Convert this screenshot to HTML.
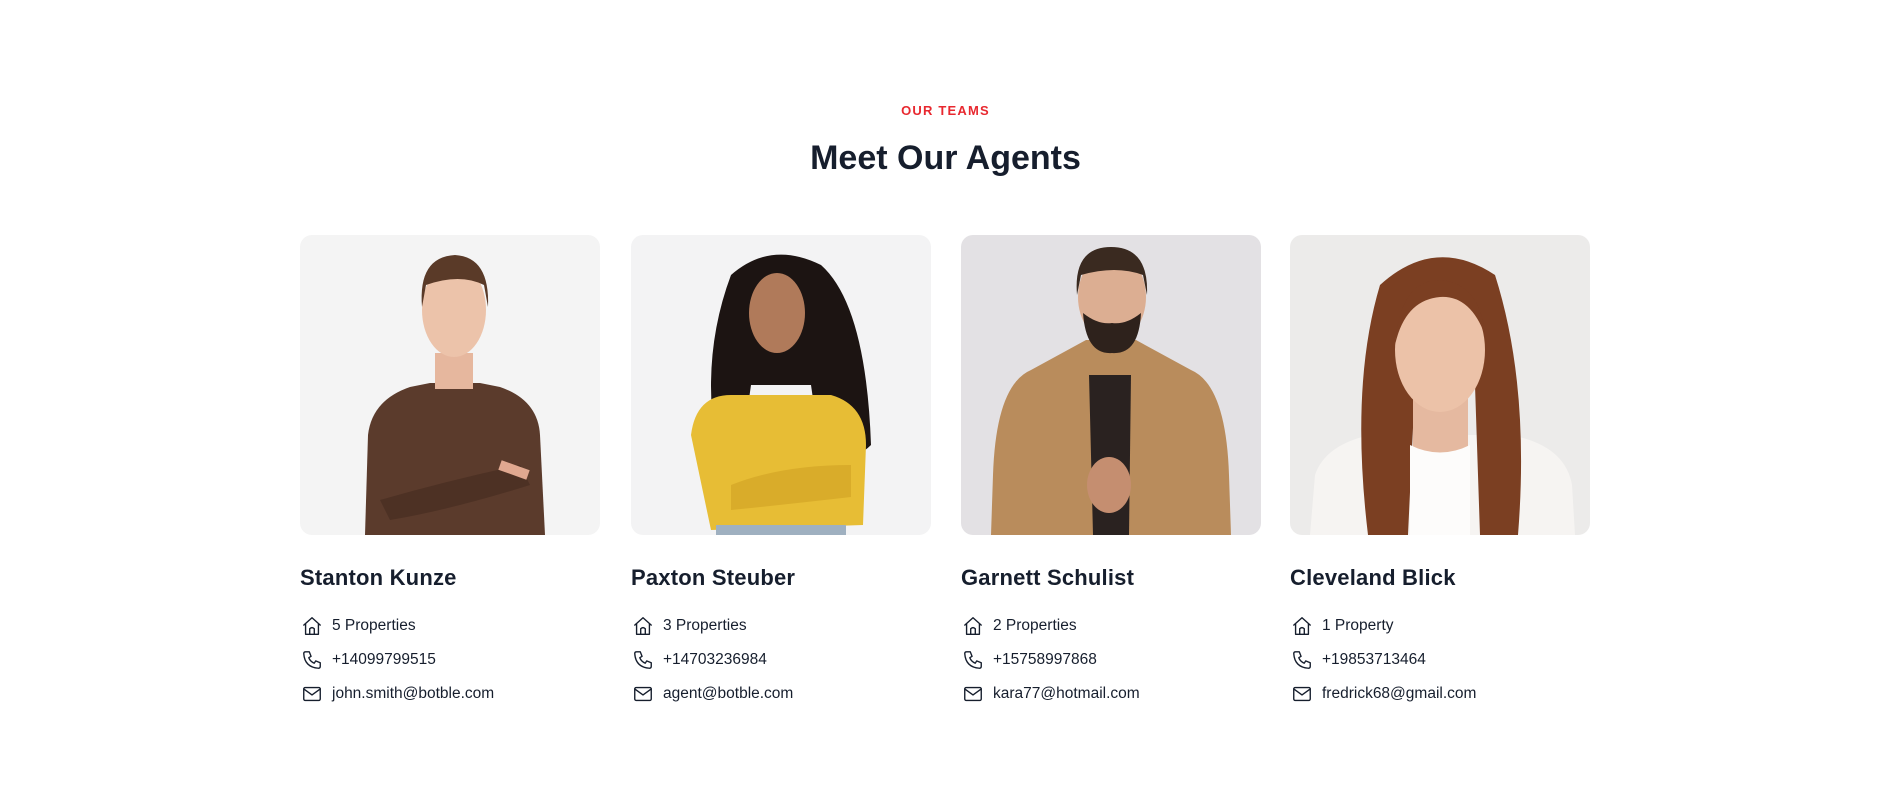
<!DOCTYPE html>
<html><head><meta charset="utf-8"><style>
*{margin:0;padding:0;box-sizing:border-box}
body{width:1891px;height:805px;background:#fff;font-family:"Liberation Sans",sans-serif;color:#161e2d;position:relative;overflow:hidden}
.sub{position:absolute;top:103px;left:0;width:1891px;text-align:center;color:#e8282f;font-size:13px;font-weight:bold;letter-spacing:1.2px}
h2{position:absolute;top:139px;left:0;width:1891px;text-align:center;font-size:34px;font-weight:bold;color:#161e2d;letter-spacing:0}
.card{position:absolute;top:235px;width:300px}
.img{width:300px;height:300px;border-radius:12px;overflow:hidden}
.img svg{display:block}
.name{margin-top:30px;font-size:22px;font-weight:bold;letter-spacing:0.2px;color:#161e2d}
.row{display:flex;align-items:center;height:34px;font-size:15.5px;color:#161e2d}
.r1{margin-top:18px}
.row svg{width:22px;height:22px;margin-left:1px;margin-right:9px;fill:none;stroke:#161e2d;stroke-width:1.5;stroke-linecap:round;stroke-linejoin:round}
</style></head><body>
<div class="sub">OUR TEAMS</div>
<h2>Meet Our Agents</h2>

<div class="card" style="left:300px">
<div class="img"><svg width="300" height="300"><rect width="300" height="300" fill="#f4f4f4"/>
<path d="M65 300 L68 200 Q72 165 110 152 L130 148 L180 148 L200 152 Q238 165 240 200 L245 300Z" fill="#5b3b2c"/>
<rect x="135" y="118" width="38" height="36" fill="#e6b79e"/>
<ellipse cx="154" cy="75" rx="32" ry="47" fill="#ecc3aa"/>
<path d="M122 72 Q118 22 155 20 Q190 22 188 72 L184 50 Q160 38 126 50Z" fill="#5a3a28"/>
<path d="M80 265 Q150 245 220 230 L230 250 Q150 275 90 285Z" fill="#4d3124"/>
<path d="M200 230 L228 240" stroke="#e0a890" stroke-width="10"/>
</svg></div>
<div class="name">Stanton Kunze</div>
<div class="row r1"><svg viewBox="0 0 24 24"><path d="M3 11 L12 3 L21 11 M5 9.5 V21 H19 V9.5 M9.5 21 V15 Q12 12.5 14.5 15 V21"/></svg>5 Properties</div>
<div class="row"><svg viewBox="0 0 24 24"><path d="M5 3 H9 L11 8 L8.5 9.5 Q10 13.5 14.5 15.5 L16 13 L21 15 V19 Q21 21 19 21 Q4 20 3 5 Q3 3 5 3Z"/></svg>+14099799515</div>
<div class="row"><svg viewBox="0 0 24 24"><rect x="3" y="5" width="18" height="14" rx="1.5"/><path d="M3 6.5 L12 13 L21 6.5"/></svg>john.smith@botble.com</div>
</div>

<div class="card" style="left:631px">
<div class="img"><svg width="300" height="300"><rect width="300" height="300" fill="#f3f3f4"/>
<path d="M85 210 Q70 120 100 40 Q140 5 190 30 Q235 70 240 210 Q220 230 190 220 L180 150 L120 150 L110 220Z" fill="#1c1412"/>
<ellipse cx="146" cy="78" rx="28" ry="40" fill="#b07a5a"/>
<path d="M60 200 Q65 160 100 160 L200 160 Q235 170 235 210 L232 290 L80 295 Z" fill="#e7bd35"/>
<path d="M100 250 Q150 230 220 230 L220 262 Q150 270 100 275Z" fill="#d9ac2a"/>
<rect x="85" y="290" width="130" height="10" fill="#9fb0c0"/>
</svg></div>
<div class="name">Paxton Steuber</div>
<div class="row r1"><svg viewBox="0 0 24 24"><path d="M3 11 L12 3 L21 11 M5 9.5 V21 H19 V9.5 M9.5 21 V15 Q12 12.5 14.5 15 V21"/></svg>3 Properties</div>
<div class="row"><svg viewBox="0 0 24 24"><path d="M5 3 H9 L11 8 L8.5 9.5 Q10 13.5 14.5 15.5 L16 13 L21 15 V19 Q21 21 19 21 Q4 20 3 5 Q3 3 5 3Z"/></svg>+14703236984</div>
<div class="row"><svg viewBox="0 0 24 24"><rect x="3" y="5" width="18" height="14" rx="1.5"/><path d="M3 6.5 L12 13 L21 6.5"/></svg>agent@botble.com</div>
</div>

<div class="card" style="left:961px">
<div class="img"><svg width="300" height="300"><rect width="300" height="300" fill="#e3e1e4"/>
<path d="M30 300 L32 240 Q35 150 70 135 L125 105 L175 105 L230 135 Q265 150 268 240 L270 300Z" fill="#b98c5c"/>
<path d="M128 140 L170 140 L168 300 L132 300Z" fill="#2a2220"/>
<ellipse cx="151" cy="62" rx="34" ry="45" fill="#dcae92"/>
<path d="M122 78 Q125 120 151 118 Q178 120 180 78 Q165 90 151 88 Q137 90 122 78Z" fill="#2e221c"/>
<path d="M116 60 Q112 12 150 12 Q188 12 186 60 L182 40 Q155 30 120 40Z" fill="#3a2a20"/>
<ellipse cx="148" cy="250" rx="22" ry="28" fill="#c58e70"/>
</svg></div>
<div class="name">Garnett Schulist</div>
<div class="row r1"><svg viewBox="0 0 24 24"><path d="M3 11 L12 3 L21 11 M5 9.5 V21 H19 V9.5 M9.5 21 V15 Q12 12.5 14.5 15 V21"/></svg>2 Properties</div>
<div class="row"><svg viewBox="0 0 24 24"><path d="M5 3 H9 L11 8 L8.5 9.5 Q10 13.5 14.5 15.5 L16 13 L21 15 V19 Q21 21 19 21 Q4 20 3 5 Q3 3 5 3Z"/></svg>+15758997868</div>
<div class="row"><svg viewBox="0 0 24 24"><rect x="3" y="5" width="18" height="14" rx="1.5"/><path d="M3 6.5 L12 13 L21 6.5"/></svg>kara77@hotmail.com</div>
</div>

<div class="card" style="left:1290px">
<div class="img"><svg width="300" height="300"><rect width="300" height="300" fill="#ecebea"/>
<path d="M20 300 L25 240 Q35 210 80 200 L220 200 Q275 210 282 250 L285 300Z" fill="#f6f4f2"/>
<path d="M78 300 Q60 150 90 50 Q145 0 205 40 Q240 150 228 300 L190 300 L185 150 L125 150 L118 300Z" fill="#7b3f22"/>
<rect x="123" y="160" width="55" height="60" fill="#e5b9a0"/>
<ellipse cx="150" cy="115" rx="45" ry="62" fill="#ecc2a8"/>
<path d="M105 110 Q110 45 150 45 Q190 48 195 100 Q180 60 150 62 Q115 65 105 110Z" fill="#7b3f22"/>
<path d="M120 210 Q150 225 180 210 L180 300 L120 300Z" fill="#fdfcfb"/>
</svg></div>
<div class="name">Cleveland Blick</div>
<div class="row r1"><svg viewBox="0 0 24 24"><path d="M3 11 L12 3 L21 11 M5 9.5 V21 H19 V9.5 M9.5 21 V15 Q12 12.5 14.5 15 V21"/></svg>1 Property</div>
<div class="row"><svg viewBox="0 0 24 24"><path d="M5 3 H9 L11 8 L8.5 9.5 Q10 13.5 14.5 15.5 L16 13 L21 15 V19 Q21 21 19 21 Q4 20 3 5 Q3 3 5 3Z"/></svg>+19853713464</div>
<div class="row"><svg viewBox="0 0 24 24"><rect x="3" y="5" width="18" height="14" rx="1.5"/><path d="M3 6.5 L12 13 L21 6.5"/></svg>fredrick68@gmail.com</div>
</div>
</body></html>
